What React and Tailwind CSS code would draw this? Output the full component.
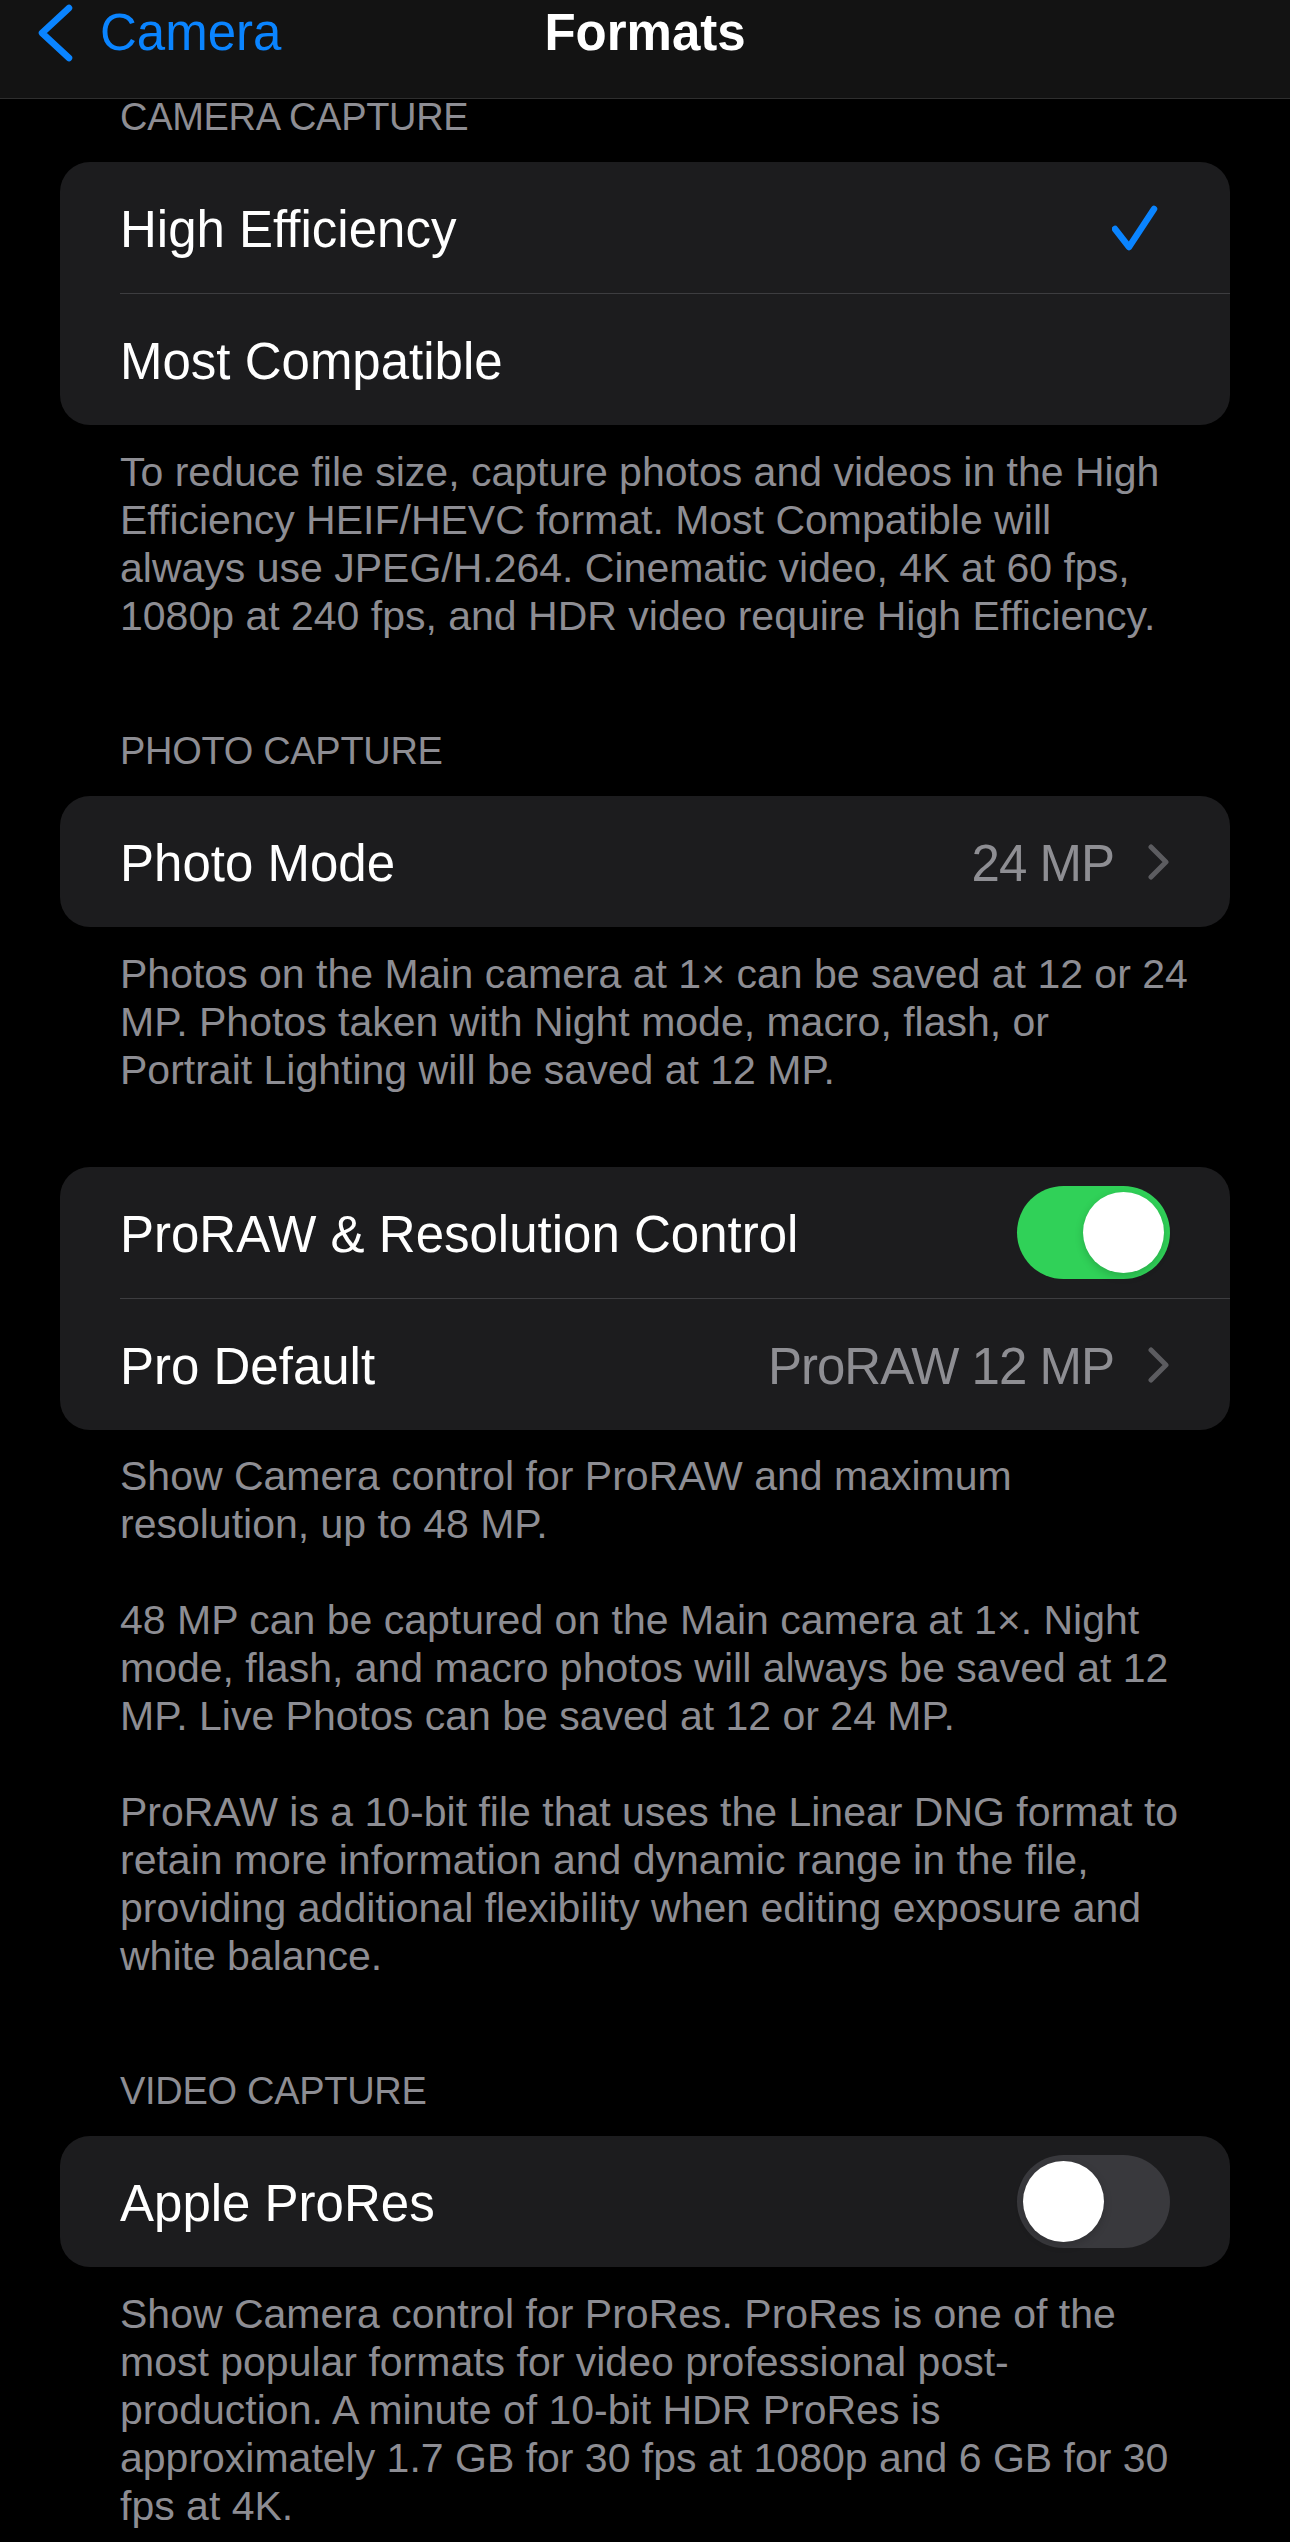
const FOOTERS = {
  capture: [[
    'To reduce file size, capture photos and videos in the High',
    'Efficiency HEIF/HEVC format. Most Compatible will',
    'always use JPEG/H.264. Cinematic video, 4K at 60 fps,',
    '1080p at 240 fps, and HDR video require High Efficiency.',
  ]],
  photo: [[
    'Photos on the Main camera at 1× can be saved at 12 or 24',
    'MP. Photos taken with Night mode, macro, flash, or',
    'Portrait Lighting will be saved at 12 MP.',
  ]],
  proraw: [
    [
      'Show Camera control for ProRAW and maximum',
      'resolution, up to 48 MP.',
    ],
    [
      '48 MP can be captured on the Main camera at 1×. Night',
      'mode, flash, and macro photos will always be saved at 12',
      'MP. Live Photos can be saved at 12 or 24 MP.',
    ],
    [
      'ProRAW is a 10-bit file that uses the Linear DNG format to',
      'retain more information and dynamic range in the file,',
      'providing additional flexibility when editing exposure and',
      'white balance.',
    ],
  ],
  video: [[
    'Show Camera control for ProRes. ProRes is one of the',
    'most popular formats for video professional post-',
    'production. A minute of 10-bit HDR ProRes is',
    'approximately 1.7 GB for 30 fps at 1080p and 6 GB for 30',
    'fps at 4K.',
  ]],
}

function Check() {
  return (
    <svg width="58" height="50" viewBox="0 0 58 50" fill="none">
      <path d="M3 26 L17 44 L42 6" stroke="#0a84ff" strokeWidth="6.5" strokeLinecap="round" strokeLinejoin="round" />
    </svg>
  )
}

function Chevron() {
  return (
    <svg width="23" height="36" viewBox="0 0 23 36" fill="none">
      <path d="M4 3 L19 18 L4 33" stroke="#5c5c60" strokeWidth="5" strokeLinecap="round" strokeLinejoin="round" />
    </svg>
  )
}

function Toggle({ on }) {
  return (
    <div
      className={
        on
          ? 'w-[153px] h-[93px] rounded-full bg-[#30d158] p-[6px] flex justify-end'
          : 'w-[153px] h-[93px] rounded-full bg-[#39393d] p-[6px] flex justify-start'
      }
    >
      <div className="w-[81px] h-[81px] rounded-full bg-white shadow-[0_3px_8px_rgba(0,0,0,0.18)]" />
    </div>
  )
}

function Row({ label, children }) {
  return (
    <div className="h-[131px] pl-[60px] pr-[60px] flex items-center justify-between">
      <span className="text-[51px] leading-[60px] pt-[4px] text-white">{label}</span>
      {children}
    </div>
  )
}

function Value({ text }) {
  return (
    <div className="flex items-center gap-[33px]">
      <span className="text-[51px] leading-[60px] pt-[4px] tracking-[-1px] text-[#8e8e93]">{text}</span>
      <Chevron />
    </div>
  )
}

function Card({ children }) {
  return <div className="bg-[#1c1c1e] rounded-[30px] overflow-hidden">{children}</div>
}

function Divider() {
  return <div className="ml-[60px] h-px bg-[#3d3d40]" />
}

function Label({ text, className }) {
  return (
    <div className={'h-[36px] pl-[60px] text-[38px] leading-[36px] tracking-[-0.3px] text-[#8d8d93] ' + className}>
      {text}
    </div>
  )
}

function Footer({ paras, className }) {
  return (
    <div className={'pl-[60px] text-[41px] leading-[48px] text-[#8d8d93] flex flex-col gap-[48px] ' + className}>
      {paras.map((lines, i) => (
        <p key={i}>
          {lines.map(line => (
            <span key={line} className="block whitespace-nowrap">{line}</span>
          ))}
        </p>
      ))}
    </div>
  )
}

export default function App() {
  return (
    <div className="min-h-[2542px] bg-black text-white font-['Liberation_Sans',Arial,sans-serif]">
      <header className="h-[99px] bg-[#131313] border-b border-[#2e2e2e]">
        <div className="h-[65px] grid grid-cols-[1fr_auto_1fr] items-center">
          <div className="flex items-center pl-[36px] text-[#0a84ff]">
            <svg width="40" height="60" viewBox="0 0 40 60" fill="none">
              <path d="M33 5 L6 30 L33 55" stroke="#0a84ff" strokeWidth="6.5" strokeLinecap="round" strokeLinejoin="round" />
            </svg>
            <span className="ml-[24px] text-[51px] leading-[60px]">Camera</span>
          </div>
          <h1 className="text-[51px] leading-[60px] font-semibold">Formats</h1>
          <div />
        </div>
      </header>

      <main className="px-[60px] pb-[12px]">
        <Label text="CAMERA CAPTURE" />
        <div className="mt-[27px]">
          <Card>
            <Row label="High Efficiency">
              <Check />
            </Row>
            <Divider />
            <Row label="Most Compatible" />
          </Card>
        </div>
        <Footer paras={FOOTERS.capture} className="mt-[23px]" />

        <Label text="PHOTO CAPTURE" className="mt-[93px]" />
        <div className="mt-[27px]">
          <Card>
            <Row label="Photo Mode">
              <Value text="24 MP" />
            </Row>
          </Card>
        </div>
        <Footer paras={FOOTERS.photo} className="mt-[23px]" />

        <div className="mt-[73px]">
          <Card>
            <Row label="ProRAW & Resolution Control">
              <Toggle on />
            </Row>
            <Divider />
            <Row label="Pro Default">
              <Value text="ProRAW 12 MP" />
            </Row>
          </Card>
        </div>
        <Footer paras={FOOTERS.proraw} className="mt-[22px]" />

        <Label text="VIDEO CAPTURE" className="mt-[93px]" />
        <div className="mt-[27px]">
          <Card>
            <Row label="Apple ProRes">
              <Toggle />
            </Row>
          </Card>
        </div>
        <Footer paras={FOOTERS.video} className="mt-[23px]" />
      </main>
    </div>
  )
}
